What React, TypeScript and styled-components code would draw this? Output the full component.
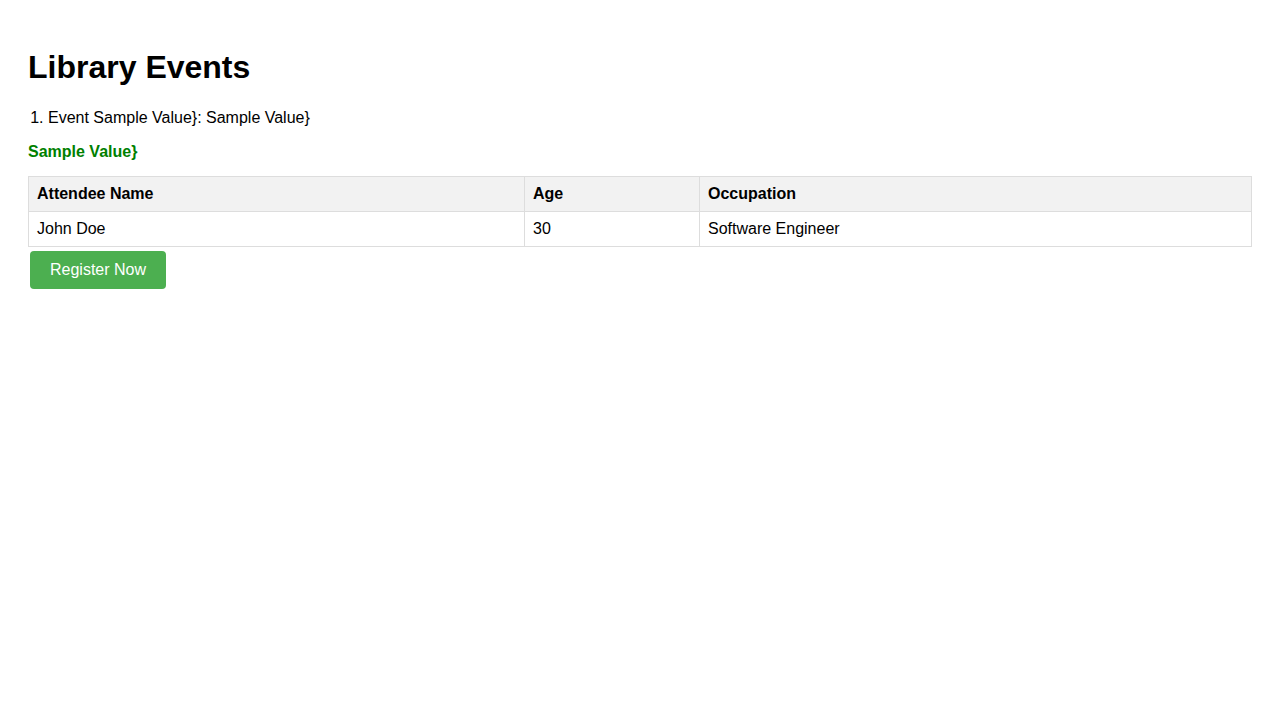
import React from 'react';
import styled, { createGlobalStyle } from 'styled-components';

const GlobalStyle = createGlobalStyle`
  body {
    margin: 8px;
    padding: 20px;
    background: #ffffff;
    color: #000000;
    font-family: 'Liberation Sans', Arial, sans-serif;
  }
`;

const Title = styled.h1`
  font-size: 32px;
  font-weight: bold;
  margin: 21.44px 0 22.5px;
`;

const EventList = styled.ol`
  margin: 16px 0;
  padding-left: 20px;
  font-size: 16px;
`;

const Highlight = styled.p`
  margin: 16px 0 15px;
  color: #008000;
  font-weight: bold;
  font-size: 16px;
`;

const Table = styled.table`
  width: 100%;
  border-collapse: collapse;
  font-size: 16px;
`;

const HeadCell = styled.th<{ $width?: number }>`
  width: ${(p) => (p.$width ? `${p.$width}px` : 'auto')};
  border: 1px solid #dddddd;
  padding: 8px;
  text-align: left;
  background: #f2f2f2;
  font-weight: bold;
`;

const Cell = styled.td`
  border: 1px solid #dddddd;
  padding: 8px;
  text-align: left;
`;

const RegisterButton = styled.button`
  display: inline-block;
  margin: 4px 2px;
  padding: 10px 20px;
  border: none;
  border-radius: 4px;
  background: #4caf50;
  color: #ffffff;
  font-family: 'Liberation Sans', Arial, sans-serif;
  font-size: 16px;
  line-height: 18px;
  cursor: pointer;
`;

const sampleValue = 'Sample Value}';

const attendees = [{ name: 'John Doe', age: 30, occupation: 'Software Engineer' }];

const App = () => {
  return (
    <>
      <GlobalStyle />
      <Title>Library Events</Title>
      <EventList>
        <li>{`Event ${sampleValue}: ${sampleValue}`}</li>
      </EventList>
      <Highlight>{sampleValue}</Highlight>
      <Table>
        <thead>
          <tr>
            <HeadCell $width={479}>Attendee Name</HeadCell>
            <HeadCell $width={158}>Age</HeadCell>
            <HeadCell>Occupation</HeadCell>
          </tr>
        </thead>
        <tbody>
          {attendees.map((a) => (
            <tr key={a.name}>
              <Cell>{a.name}</Cell>
              <Cell>{a.age}</Cell>
              <Cell>{a.occupation}</Cell>
            </tr>
          ))}
        </tbody>
      </Table>
      <RegisterButton>Register Now</RegisterButton>
    </>
  );
};

export default App;
